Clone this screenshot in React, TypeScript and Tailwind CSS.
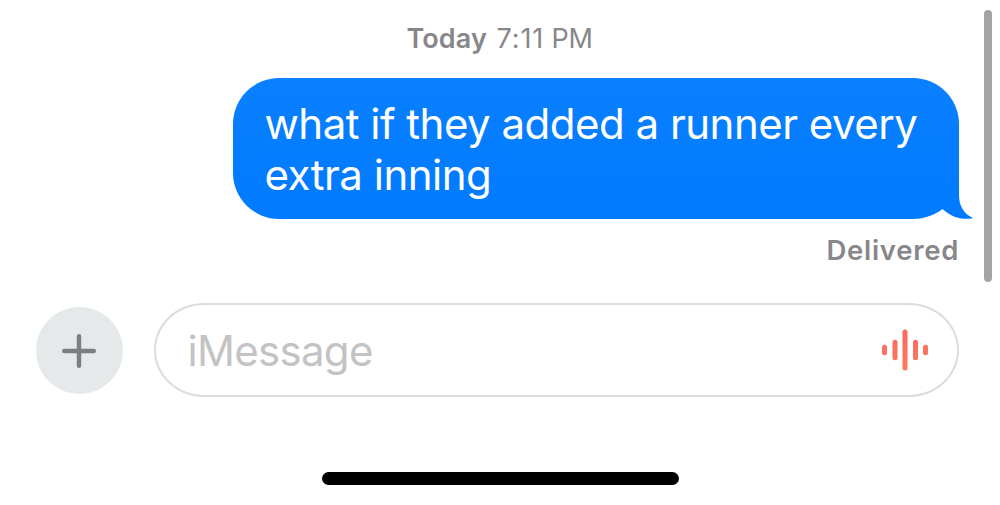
const waveBars = [
  { x: 2.5, height: 10.5 },
  { x: 13, height: 20.5 },
  { x: 23, height: 41 },
  { x: 33.5, height: 20.5 },
  { x: 43.5, height: 10.5 },
];

export default function App() {
  return (
    <main className="relative h-[505px] w-[1000px] overflow-hidden bg-white font-['Inter','Liberation_Sans',sans-serif]">
      <Conversation />
      <Composer />
      <div className="mx-auto mt-[75px] h-[12.5px] w-[357px] rounded-full bg-black" />
      {/* Scroll indicator floats over the conversation */}
      <div className="absolute top-[10px] right-[7.6px] h-[272px] w-2 rounded-full bg-[#a4a4a4]" />
    </main>
  );
}

function Conversation() {
  return (
    <section className="flex h-[303px] flex-col items-end pt-[23px] pr-[41px] pl-[41px]">
      <p className="flex h-8 self-center text-[27px] leading-8 whitespace-nowrap text-[#87878b]">
        <span className="w-[90px] font-semibold tracking-[0.1px]">Today</span>
        <span className="w-[55px] tracking-[0.9px]">7:11</span>
        <span className="w-[42px] tracking-[-0.3px]">PM</span>
      </p>
      <div className="relative mt-[23.4px] h-[141px] w-[726px] rounded-[46px] bg-linear-to-b from-[#0a80ff] to-[#007aff] pt-[20px] pl-[31.5px]">
        <p className="text-[42px] leading-[51px] tracking-[-0.5px] whitespace-nowrap text-white">
          what if they added a runner every
          <br />
          extra inning
        </p>
        <BubbleTail />
      </div>
      <p className="mt-[14.6px] text-[27.5px] leading-8 font-semibold tracking-[0.7px] text-[#87878b]">Delivered</p>
    </section>
  );
}

function BubbleTail() {
  return (
    <svg className="absolute right-[-14px] bottom-0 h-[60px] w-[54px]" viewBox="0 0 54 60">
      <defs>
        {/* Continues the bubble's own gradient */}
        <linearGradient id="tail" gradientUnits="userSpaceOnUse" x1="0" y1="-81" x2="0" y2="60">
          <stop stopColor="#0a80ff" />
          <stop offset="1" stopColor="#007aff" />
        </linearGradient>
      </defs>
      <path
        d="M8 46 L30 10 H40 V36 C40 47 45 55 53.5 58.7 C54 59 53.5 59.3 52.5 59.5 C42 61 32 58 23.5 50 C20 53 14 55.5 8 57.5 Z"
        fill="url(#tail)"
      />
    </svg>
  );
}

function Composer() {
  return (
    <section className="flex h-[94px] items-center gap-[31px] pl-9">
      <button className="flex size-[87px] items-center justify-center rounded-full bg-[#e6e9ea] pt-px pr-px">
        <svg className="size-[34px]" viewBox="0 0 34 34" stroke="#7b7e82" strokeWidth="4.4" strokeLinecap="round">
          <path d="M2.2 17H31.8M17 2.2V31.8" />
        </svg>
      </button>
      <div className="flex h-[94px] w-[805px] items-center justify-between rounded-[50px/47px] border-2 border-[#dcdcde] pr-[29px] pl-[31.5px]">
        <span className="mt-0.5 text-[42px] leading-[50px] tracking-[-0.7px] text-[#c3c3c5]">iMessage</span>
        <svg className="h-[42px] w-[46px]" viewBox="0 0 46 42">
          {waveBars.map((bar) => (
            <rect key={bar.x} x={bar.x - 2.5} y={21 - bar.height / 2} width="5" height={bar.height} rx="2.5" fill="url(#wave)" />
          ))}
          <defs>
            <linearGradient id="wave" gradientUnits="userSpaceOnUse" x1="0" y1="0" x2="0" y2="42">
              <stop stopColor="#fb6860" />
              <stop offset="1" stopColor="#fb7a5c" />
            </linearGradient>
          </defs>
        </svg>
      </div>
    </section>
  );
}
